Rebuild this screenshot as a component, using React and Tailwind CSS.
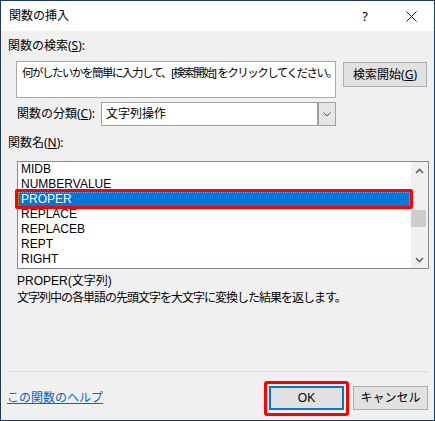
const ITEMS = ['MIDB', 'NUMBERVALUE', 'PROPER', 'REPLACE', 'REPLACEB', 'REPT', 'RIGHT']

const FONT = { fontFamily: '"Noto Sans", "Noto Sans CJK JP", sans-serif' }
const LATIN = { fontFamily: '"Liberation Sans", "Noto Sans CJK JP", sans-serif' }

function Chevron({ up }) {
  return (
    <svg width="9" height="6" viewBox="0 0 9 6" className="block">
      <path d={up ? 'M1 5 L4.5 1.5 L8 5' : 'M1 1 L4.5 4.5 L8 1'} fill="none" stroke="#606060" strokeWidth="1.6" />
    </svg>
  )
}

export default function App() {
  return (
    <div className="w-[435px] h-[421px] bg-[#f0f0f0] border border-[#1f3a58] text-[12px] leading-[16px] text-black flex flex-col" style={FONT}>

      {/* ── Title bar ── */}
      <div className="h-[30px] bg-white flex items-center shrink-0">
        <span className="pl-[8px] flex-1">関数の挿入</span>
        <span className="w-[46px] text-center text-[13px]">?</span>
        <span className="w-[46px] flex justify-center">
          <svg width="11" height="11" viewBox="0 0 11 11">
            <path d="M0.5 0.5 L10.5 10.5 M10.5 0.5 L0.5 10.5" stroke="#222" strokeWidth="1" />
          </svg>
        </span>
      </div>

      {/* ── Body ── */}
      <div className="pl-[7px] flex flex-col">
        <div className="mt-[7px] h-[16px]">関数の検索(<span className="underline">S</span>):</div>

        <div className="mt-[7px] flex items-start">
          <div className="ml-[8px] w-[320px] h-[37px] bg-white border border-[#a9a9a9] pl-[5px] pt-[3px] text-[11.5px] tracking-[-1.5px] whitespace-nowrap overflow-hidden">
            何がしたいかを簡単に入力して、[検索開始] をクリックしてください。
          </div>
          <div className="ml-[7px] mt-[1px] w-[84px] h-[25px] bg-[#e1e1e1] border border-[#adadad] flex items-center justify-center">
            検索開始(<span className="underline">G</span>)
          </div>
        </div>

        <div className="mt-[4px] ml-[9px] flex items-center">
          <span className="w-[84px]">関数の分類(<span className="underline">C</span>):</span>
          <div className="w-[235px] h-[24px] bg-white border border-[#a0a0a0] flex items-center">
            <span className="flex-1 pl-[4px]">文字列操作</span>
            <div className="w-[18px] h-full bg-[#e5e5e5] border-l-2 border-[#a0a0a0] flex items-center justify-center">
              <svg width="8" height="5" viewBox="0 0 8 5">
                <path d="M0.5 0.5 L4 4 L7.5 0.5" fill="none" stroke="#555" strokeWidth="1" />
              </svg>
            </div>
          </div>
        </div>

        <div className="mt-[9px] h-[16px]">関数名(<span className="underline">N</span>):</div>

        <div className="mt-[10px] ml-[9px] w-[412px] h-[108px] bg-white border border-[#828790] flex" style={LATIN}>
          <div className="flex-1 flex flex-col">
            {ITEMS.map(name => (
              name === 'PROPER' ? (
                <div key={name} className="relative h-[15px] mr-[1px] bg-[#0078d7] text-white leading-[15px] pl-[3px] outline-1 outline-dotted outline-[#d79a3a] -outline-offset-1">
                  {name}
                  <div className="absolute -left-[3px] -top-[3px] -right-[3px] -bottom-[2px] border-[3px] border-[#ff0000] rounded-[2px]" />
                </div>
              ) : (
                <div key={name} className="h-[15px] leading-[15px] pl-[3px]">{name}</div>
              )
            ))}
          </div>
          <div className="w-[17px] bg-[#f0f0f0] flex flex-col items-center">
            <div className="h-[17px] flex items-center justify-center"><Chevron up /></div>
            <div className="mt-[31px] w-[15px] h-[17px] bg-[#cdcdcd] self-start" />
            <div className="flex-1" />
            <div className="h-[17px] flex items-center justify-center"><Chevron /></div>
          </div>
        </div>

        <div className="mt-[4px] ml-[9px] h-[16px]" style={LATIN}>PROPER(文字列)</div>
        <div className="mt-[1px] ml-[9px] h-[16px] tracking-[-1px]">文字列中の各単語の先頭文字を大文字に変換した結果を返します。</div>

        <div className="mt-[65px] w-[421px] h-px bg-[#dfdfdf]" />

        <div className="mt-[14px] flex items-center">
          <a className="flex-1 text-[#0066cc] underline -ml-[1px]">この関数のヘルプ</a>
          <div className="relative w-[75px] h-[24px] bg-[#e1e1e1] border-2 border-[#0078d7] flex items-center justify-center" style={LATIN}>
            OK
            <div className="absolute -left-[7px] -top-[7px] -right-[7px] -bottom-[8px] border-[3px] border-[#ff0000] rounded-[3px]" />
          </div>
          <div className="ml-[9px] mr-[6px] w-[75px] h-[24px] bg-[#e1e1e1] border border-[#adadad] flex items-center justify-center">
            キャンセル
          </div>
        </div>
      </div>
    </div>
  )
}
